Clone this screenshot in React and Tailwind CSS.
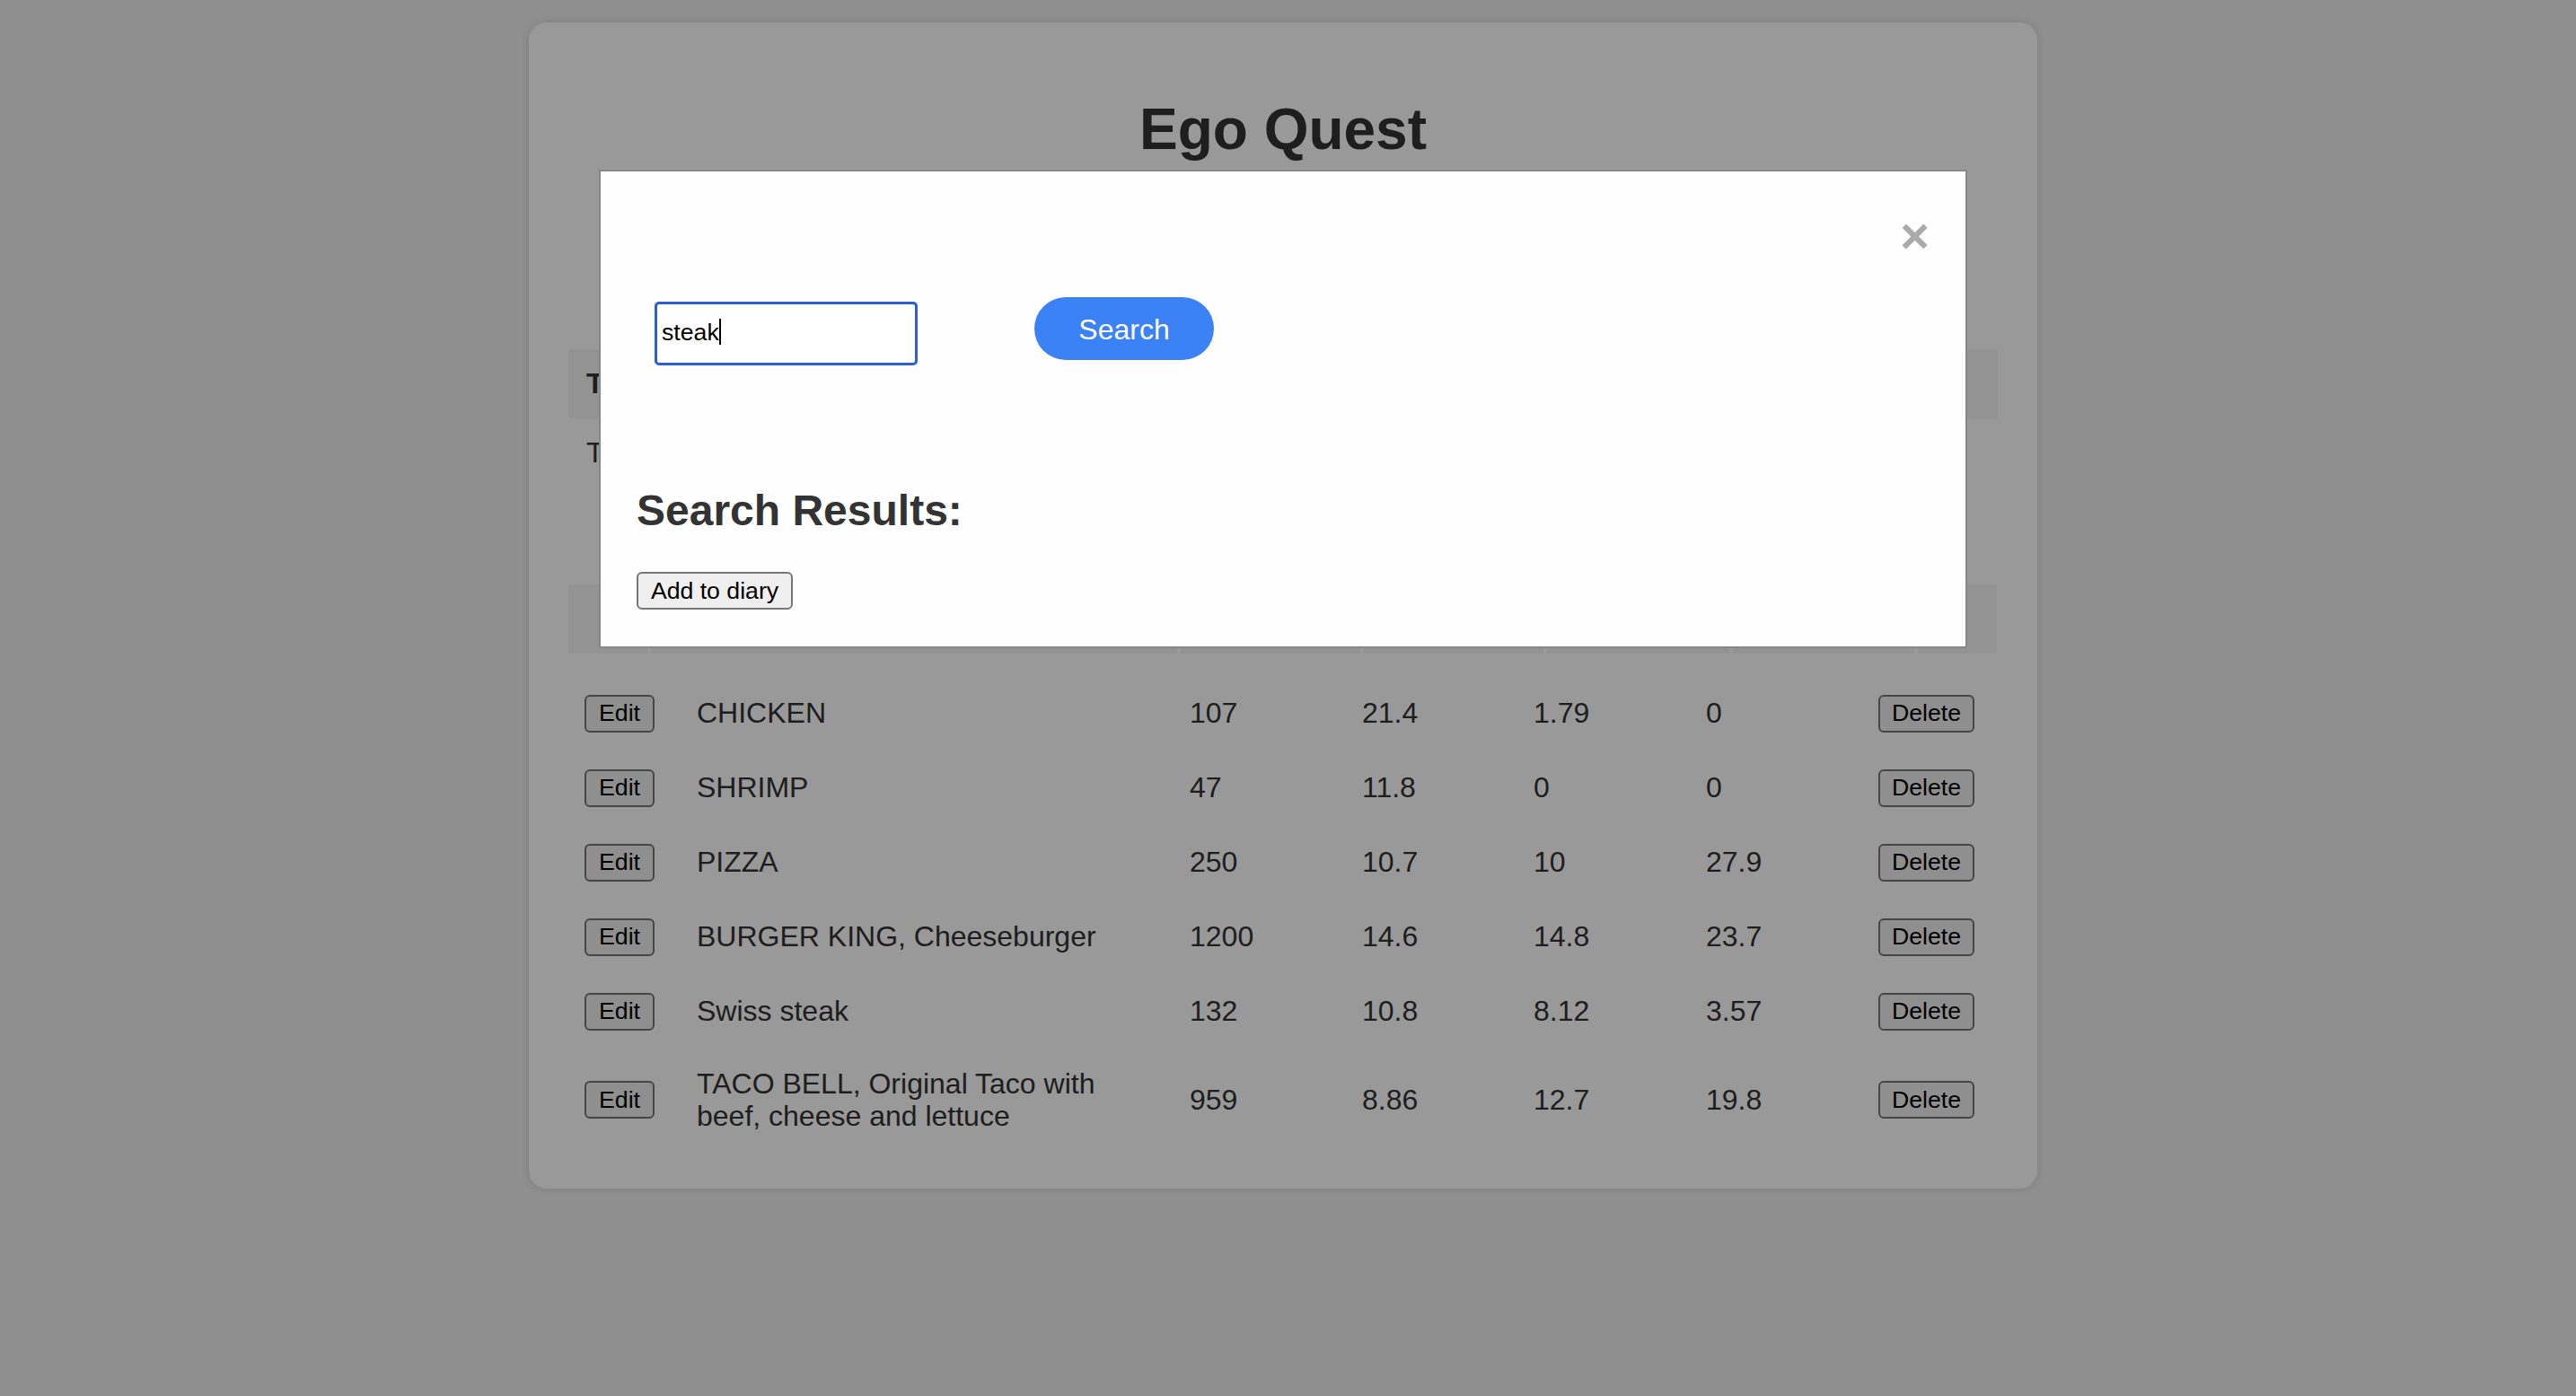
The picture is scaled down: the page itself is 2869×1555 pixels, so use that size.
export default function App() {
  const rows = [
    ["CHICKEN", "107", "21.4", "1.79", "0"],
    ["SHRIMP", "47", "11.8", "0", "0"],
    ["PIZZA", "250", "10.7", "10", "27.9"],
    ["BURGER KING, Cheeseburger", "1200", "14.6", "14.8", "23.7"],
    ["Swiss steak", "132", "10.8", "8.12", "3.57"],
    ["TACO BELL, Original Taco with beef, cheese and lettuce", "959", "8.86", "12.7", "19.8"],
  ];

  const btn =
    "h-[42px] border-2 border-[#767676] rounded-[6px] bg-[#efefef] text-[26.67px] text-black leading-none flex items-center justify-center";

  return (
    <div className="relative min-h-screen bg-[#eeeeee] font-['Liberation_Sans',Arial,sans-serif] pt-[25px] overflow-hidden">
      {/* Background card */}
      <div className="ml-[589px] w-[1680px] bg-white rounded-[20px] shadow-[0_0_10px_rgba(0,0,0,0.12)] px-[40px] pt-[40px] pb-[42px]">
        <h1 className="mt-[43px] text-[64px] leading-[73.6px] font-bold text-center text-[#333]">Ego Quest</h1>
        <div className="h-[207px]" />

        <div className="px-[4px]">
          {/* Totals table */}
          <div className="flex gap-[4px] h-[77px]">
            {["Total Calories", "Total Protein", "Total Fat", "Total Carbs"].map((t) => (
              <div key={t} className="flex-1 bg-[#f5f5f5] flex items-center px-[20px] text-[32px] font-bold text-[#333]">
                {t}
              </div>
            ))}
          </div>
          <div className="mt-[4px] h-[69px] flex items-center gap-[4px]">
            {["Totals", "1366", "71.5", "43.0", "75.3"].map((t) => (
              <div key={t} className="flex-1 px-[20px] text-[32px] text-[#333]">
                {t}
              </div>
            ))}
          </div>

          {/* Food table header */}
          <div className="mt-[112px] flex gap-[4px] h-[77px] text-[32px] font-bold text-[#333]">
            <div className="w-[88px] bg-[#f5f5f5]" />
            <div className="w-[586px] bg-[#f5f5f5] flex items-center px-[20px]">Food</div>
            <div className="w-[200px] bg-[#f5f5f5] flex items-center px-[20px]">Calories</div>
            <div className="w-[200px] bg-[#f5f5f5] flex items-center px-[20px]">Protein</div>
            <div className="w-[203px] bg-[#f5f5f5] flex items-center px-[20px]">Fat</div>
            <div className="w-[202px] bg-[#f5f5f5] flex items-center px-[20px]">Carbs</div>
            <div className="w-[88px] bg-[#f5f5f5]" />
          </div>

          {/* Food rows */}
          <div className="mt-[26px] flex flex-col gap-[1px]">
            {rows.map((r) => (
              <div
                key={r[0]}
                className="grid grid-cols-[143px_549px_192px_191px_192px_192px_1fr] items-center py-[20px] text-[32px] leading-[36.8px] text-[#333]"
              >
                <div className="pl-[18px]">
                  <button className={btn + " w-[78px]"}>Edit</button>
                </div>
                <div className="max-w-[490px]">{r[0]}</div>
                <div>{r[1]}</div>
                <div>{r[2]}</div>
                <div>{r[3]}</div>
                <div>{r[4]}</div>
                <div>
                  <button className={btn + " w-[107px]"}>Delete</button>
                </div>
              </div>
            ))}
          </div>
        </div>
      </div>

      {/* Overlay + modal */}
      <div className="fixed inset-0 bg-black/40 font-['Liberation_Sans',Arial,sans-serif]">
        <div className="ml-[667px] mt-[189px] w-[1524px] border-2 border-[#888] bg-[#fefefe] px-[40px] pt-[40px] pb-[41px]">
          <div className="flex justify-end h-[100px]">
            <span className="mt-[4px] text-[56px] leading-[56px] font-bold text-[#aaa]">×</span>
          </div>
          <div className="flex items-start">
            <div className="ml-[20px] mt-[5px] w-[293px] h-[71px] border-[3px] border-[#2c60d1] rounded-[5px] bg-white flex items-center pl-[5px] pb-[4px] text-[26.67px] text-black">
              <span>steak</span>
              <span className="w-[2px] h-[29px] bg-black" />
            </div>
            <button className="ml-[130px] w-[200px] h-[70px] rounded-full bg-[#3b82f6] text-white text-[32px] leading-none pt-[2px]">
              Search
            </button>
          </div>
          <h2 className="mt-[134px] text-[48px] leading-[55.2px] font-bold text-[#333]">Search Results:</h2>
          <button className={btn + " mt-[41px] w-[174px]"}>Add to diary</button>
        </div>
      </div>
    </div>
  );
}
